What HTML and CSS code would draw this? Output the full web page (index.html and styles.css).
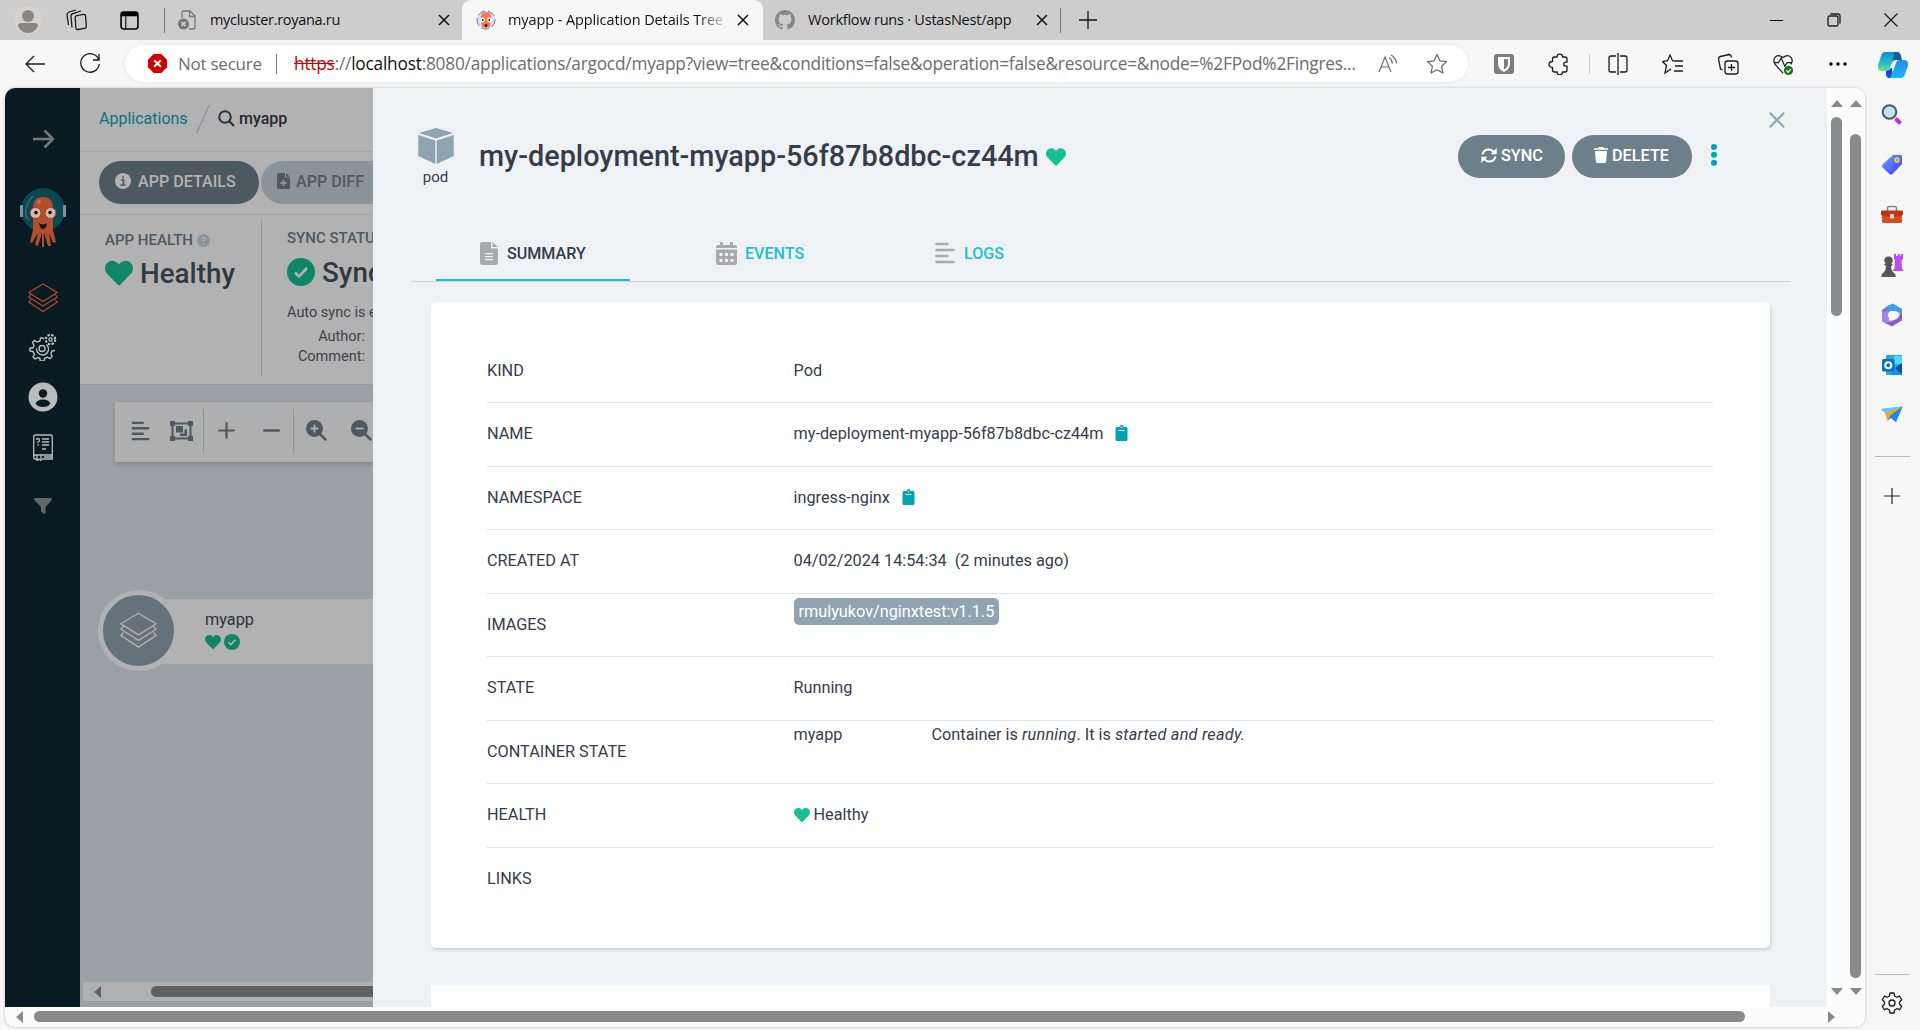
FILE: index.html
```html
<!DOCTYPE html>
<html lang="en">
<head>
<meta charset="utf-8">
<title>myapp - Application Details Tree</title>
<link rel="stylesheet" href="styles.css">
</head>
<body>
<svg class="defs" aria-hidden="true">
  <symbol id="heart" viewBox="0 0 512 512"><path d="M462 62c-55-47-136-38-186 14l-20 20-20-20C186 24 105 15 50 62c-63 54-66 150-10 208l193 199c13 13 33 13 46 0l193-199c56-58 53-154-10-208z"/></symbol>
  <symbol id="check" viewBox="0 0 28 28"><circle cx="14" cy="14" r="14"/><path d="M8 14.500l4 4 8-8.500" fill="none" stroke="#b2b2b2" stroke-width="2.600"/></symbol>
  <symbol id="layers" viewBox="0 0 30 30"><g fill="none" stroke="currentColor" stroke-width="1.100" stroke-linejoin="round"><path d="M15 1l14.300 8.500L15 18.500.7 9.500zM3 11.500L.7 14 15 23l14.300-9L27 11.500M3 16.500L.7 19 15 28.500 29.300 19 27 16.500"/></g></symbol>
  <symbol id="x" viewBox="0 0 12 12"><path d="M1 1l10 10M11 1L1 11" fill="none" stroke="currentColor" stroke-width="1.500"/></symbol>
  <symbol id="clip" viewBox="0 0 12 16"><path d="M1.500 2H4a2 2 0 0 1 4 0h2.500A1.500 1.500 0 0 1 12 3.500v11a1.500 1.500 0 0 1-1.500 1.500h-9A1.500 1.500 0 0 1 0 14.500v-11A1.500 1.500 0 0 1 1.500 2z"/><path d="M3 5.500h6" stroke="#fff" stroke-width="1"/><circle cx="6" cy="2.500" r=".8" fill="#fff"/></symbol>
  <symbol id="align" viewBox="0 0 20 22"><path d="M1.500 2h11M1.500 8h17M1.500 14h11M1.500 20h17" fill="none" stroke="currentColor" stroke-width="2.600" stroke-linecap="round"/></symbol>
</svg>

<header class="tabstrip">
  <svg class="avatar" viewBox="0 0 28 28"><circle cx="14" cy="14" r="14" fill="#d5d2ce"/><circle cx="14" cy="10" r="6" fill="#8a8582"/><path d="M4 20q0-3 3-3h14q3 0 3 3-3 7-10 7T4 20z" fill="#8a8582"/></svg>
  <svg class="workspaces line" viewBox="0 0 22 22"><rect x="9.500" y="6" width="10.500" height="14" rx="2" transform="rotate(-4 15 13) skewY(-6) translate(0 1.500)"/><path d="M6 18.500L5 7q0-2 2-2.500l8-2.500M2.500 16L1 6q0-2 2-3l7-2"/></svg>
  <svg class="tabmenu" viewBox="0 0 18 18"><rect x="1" y="1" width="16" height="16" rx="2.500" fill="none" stroke="#000" stroke-width="1.500"/><path d="M1 1h16v4H1z"/><path d="M5.500 5v12" stroke="#000"/></svg>
  <i class="vbar"></i>
  <div class="tab tab-first">
    <svg class="badpage" viewBox="0 0 18 20"><path d="M4 8V3q0-2 2-2h6l5 5v11q0 2-2 2h-4M11.500 1v5.500H17" fill="none" stroke="#767676" stroke-width="1.300"/><circle cx="5.500" cy="14" r="5.500" fill="#767676"/><path d="M3.500 12l4 4m0-4l-4 4" stroke="#ddd" stroke-width="1.300"/></svg>
    <span class="tab-title">mycluster.royana.ru</span>
    <svg class="tab-x"><use href="#x"/></svg>
  </div>
  <div class="tab tab-active">
    <svg class="favicon" viewBox="0 0 20 20"><circle cx="10" cy="10" r="9" fill="#dfe0ef" stroke="#7668b8" stroke-width="1" stroke-dasharray="8 3"/><path d="M4.500 9Q4.500 2 10 2t5.500 7l-2 9-2-1.500L10 19l-1.500-2.500-2 1.500z" fill="#ef7b4d"/><circle cx="6.500" cy="10" r="2.400" fill="#fff"/><circle cx="13.500" cy="10" r="2.400" fill="#fff"/><circle cx="6.700" cy="10" r=".9"/><circle cx="13.300" cy="10" r=".9"/><circle cx="10" cy="15.500" r="1.500" fill="#222"/></svg>
    <span class="tab-title">myapp - Application Details Tree</span>
    <svg class="tab-x"><use href="#x"/></svg>
  </div>
  <div class="tab tab-last">
    <svg class="github" viewBox="0 0 16 16"><path d="M8 0C3.580 0 0 3.580 0 8c0 3.540 2.290 6.530 5.470 7.590.4.070.55-.17.55-.38v-1.490c-2.010.37-2.530-.49-2.690-.94-.09-.23-.48-.94-.82-1.130-.28-.15-.68-.52-.01-.53.63-.01 1.080.58 1.230.82.72 1.210 1.870.87 2.330.66.07-.52.28-.87.51-1.070-1.780-.2-3.640-.89-3.640-3.950 0-.87.31-1.590.82-2.150-.08-.2-.36-1.020.08-2.120 0 0 .67-.21 2.200.82A7.600 7.600 0 0 1 8 3.860c.68 0 1.360.09 2 .27 1.530-1.040 2.200-.82 2.200-.82.44 1.100.16 1.920.08 2.120.51.56.82 1.270.82 2.150 0 3.070-1.870 3.750-3.650 3.950.29.25.54.73.54 1.480v2.200c0 .21.15.46.55.38A8 8 0 0 0 16 8c0-4.420-3.580-8-8-8z"/></svg>
    <span class="tab-title">Workflow runs · UstasNest/app</span>
    <svg class="tab-x"><use href="#x"/></svg>
  </div>
  <i class="vbar"></i>
  <svg class="newtab" viewBox="0 0 18 18"><path d="M9 0v18M0 9h18" stroke="#111" stroke-width="1.300"/></svg>
  <div class="winbtns">
    <svg viewBox="0 0 14 14"><path d="M0 7.500h13" stroke="#000"/></svg>
    <svg viewBox="0 0 14 14" class="line"><rect x="1" y="3" width="10" height="10" rx="1.500"/><path d="M3.500 1H11q2 0 2 2v7.500"/></svg>
    <svg viewBox="0 0 14 14" class="line"><path d="M.5.5l13 13m0-13l-13 13"/></svg>
  </div>
</header>

<div class="toolbar">
  <svg class="back line" viewBox="0 0 20 18"><path d="M20 9H1M9 1L1 9l8 8"/></svg>
  <svg class="reload line" viewBox="0 0 22 22"><path d="M19.500 6A9.300 9.300 0 1 0 20.300 11M20 1v6h-6"/></svg>
  <div class="urlbar">
    <svg class="unsafe" viewBox="0 0 20 20"><path d="M6 0h8l6 6v8l-6 6H6l-6-6V6z" fill="#d10000"/><path d="M6.500 6.500l7 7m0-7l-7 7" stroke="#fff" stroke-width="2.200"/></svg>
    <span class="notsecure">Not secure</span>
    <i class="urlsep"></i>
    <span class="url"><s>https</s>://<b>localhost</b>:8080/applications/argocd/myapp?view=tree&amp;conditions=false&amp;operation=false&amp;resource=&amp;node=%2FPod%2Fingres...</span>
    <svg class="read" viewBox="0 0 20 20"><path d="M1 18L7 3l6 15M3.200 13h7.600M11 3.500q3 2 3.500 6M13 1q5 3 5.500 8.500" fill="none" stroke="#6a6a6a" stroke-width="1.200"/></svg>
    <svg class="star" viewBox="0 0 22 22"><path d="M11 1.500l2.900 6.300 6.700.8-5 4.700 1.400 6.800-6-3.400-6 3.400 1.400-6.800-5-4.700 6.700-.8z" fill="none" stroke="#666" stroke-width="1.200" stroke-linejoin="round"/></svg>
  </div>
  <div class="tools">
    <svg viewBox="0 0 22 22"><rect x="1" y="1" width="20" height="20" rx="3" fill="#7d7d7d"/><path d="M5 4h12v7q0 5-6 8-6-3-6-8z" fill="#fff"/><path d="M11 6h4v5q0 3-4 5.500z" fill="#7d7d7d"/></svg>
    <svg viewBox="0 0 22 22" class="line"><path d="M6.500 4H9a2.800 2.800 0 0 1 5.600 0H17q2 0 2 2v3.200h-1.200a2 2 0 0 0 0 4H19V17q0 2-2 2h-2.400a2.800 2.800 0 0 1-5.600 0H6.500q-2 0-2-2v-2.500H4a3 3 0 0 1 0-6h.5V6q0-2 2-2z"/></svg>
    <i class="toolsep"></i>
    <svg viewBox="0 0 22 22" class="line"><path d="M9 3H4Q2 3 2 5v12q0 2 2 2h5M13 3h5q2 0 2 2v12q0 2-2 2h-5M11 0v22"/></svg>
    <svg viewBox="0 0 22 22" class="line"><path d="M13 8l-2.500-.3L8 2 5.500 7.700l-5 .8 4 4L3 20l6-4M13 8h8M13 13h8M12 18h9"/></svg>
    <svg viewBox="0 0 22 22" class="line"><rect x="8" y="8" width="13" height="13" rx="2.500"/><path d="M14.500 11v7M11 14.500h7M5.500 17L3.500 16 1.500 6q0-2 2-2.500L12 1.500q2 0 2.500 3"/></svg>
    <svg viewBox="0 0 22 24" class="line"><path d="M11 22L2.500 12.500Q-.5 8 2.500 4.500t8.500.5q5-4 8.500-.5 3 4 0 8M2 10.500h4l3-5 4 9 2.500-4H20"/><circle cx="17" cy="19" r="5" fill="#167c17" stroke="none"/><path d="M14.500 19l2 2 3-3.500" stroke="#fff"/></svg>
    <svg viewBox="0 0 22 22"><circle cx="4" cy="11" r="1.700"/><circle cx="11" cy="11" r="1.700"/><circle cx="18" cy="11" r="1.700"/></svg>
  </div>
  <svg class="copilot" viewBox="0 0 30 26"><defs><linearGradient id="ca" x2="0" y2="1"><stop stop-color="#0a8fd8"/><stop offset=".5" stop-color="#20b8c8"/><stop offset="1" stop-color="#72dc8c"/></linearGradient><linearGradient id="cb" x2="0" y2="1"><stop stop-color="#2c8bea"/><stop offset="1" stop-color="#19b8f5"/></linearGradient></defs><path d="M7 0h12q3 0 4 4l-6 3q-2 0-3 4l-2 5q-1 3-4 3H3q-4-1-3-6L3 4q1-4 4-4z" fill="url(#ca)"/><path d="M16 0h3q3 0 4 4l1 4h-6q-2 0-4 2 2-4 2-10z" fill="#155c9e"/><path d="M23 26H11q-3 0-3-4l4-2h1q2 0 3-4l2-5q1-3 3-3h6q4 1 3 6l-3 8q-1 4-4 4z" fill="url(#cb)"/><path d="M8 19q3 0 5-3l1 0v5q-1 5-3 5t-3-4z" fill="#1747d8"/></svg>
</div>

<div class="body">
  <div class="viewport">
    <div class="page">
      <nav class="nav">
        <svg class="n-arrow" viewBox="0 0 22 20"><path d="M1 10h20M12.500 1.500L21 10l-8.500 8.500" fill="none" stroke="#73787a" stroke-width="2.500"/></svg>
        <svg class="n-logo" viewBox="0 0 46 60"><circle cx="23" cy="22" r="21.500" fill="#0a4850" stroke="#17434e"/><rect y="17" width="3" height="12" rx="1" fill="#8092a0"/><rect x="43" y="17" width="3" height="12" rx="1" fill="#8092a0"/><path d="M13 8Q7 14 6 22t3 10" fill="none" stroke="#3a7075" stroke-width="1.300"/><path d="M13 20q0-11 10-11t10 11v22l3 12-3 1-4-10 2 13h-3l-4-13v14h-2V45l-4 13-3-1 3-12-6 10-2-1 3-12z" fill="#b24e2b"/><circle cx="15.500" cy="25" r="5.500" fill="#cbb9b1" stroke="#aa3928"/><circle cx="30.500" cy="25" r="5.500" fill="#cbb9b1" stroke="#aa3928"/><circle cx="16" cy="24.500" r="1.700"/><circle cx="30" cy="24.500" r="1.700"/><path d="M19 35q4 3 8 0-1 6-4 6t-4-6z" fill="#160e0e"/><circle cx="19" cy="14" r="2" fill="#c6724e"/></svg>
        <svg class="n-layers"><use href="#layers"/></svg>
        <svg class="n-gear" viewBox="0 0 28 28" fill="none" stroke="#b7bec0" stroke-width="1.400"><circle cx="13" cy="15.500" r="3"/><path d="M15 6l-1-1h-2.500L11 8 8 9 5.500 7.500 3.500 9.500 5 12.500 4 15H1v3l3 .5 1.500 3L4 24l2 2 3-1.500 2 1V28h4l.5-2.500 3-1.500 2.500 1.500 2-2-1-3 1-2.500 3-.5M7.500 15.500a6 6 0 1 0 10-4"/><circle cx="21.500" cy="6.500" r="1.600"/><circle cx="21.500" cy="6.500" r="4.700" stroke-width="2.200" stroke-dasharray="2.400 1.300"/></svg>
        <svg class="n-user" viewBox="0 0 30 30"><circle cx="15" cy="15" r="14.500" fill="#b7bbbc"/><circle cx="15" cy="11.500" r="4.200" fill="#0a1a22"/><path d="M7.500 21.500q2-4 7.500-4t7.500 4Q20 25 15 25t-7.500-3.500z" fill="#0a1a22"/></svg>
        <svg class="n-docs" viewBox="0 0 20 27" fill="none" stroke="#b7bec0" stroke-width="1.300"><path d="M4 25H2.500Q.7 25 .7 23V3Q.7 1 2.500 1h15q1.800 0 1.800 2v22H9M.7 23q0-2 2-2h16.500M4 21v5.500l2-1.500 2 1.500V21M11 23h8M9 5h7M9 8h7M9 11h7M9 15h4"/><path d="M3.500 6q0-1.500 1.500-1.500T6.500 6 5 8v1.200M5 10.500v1.500"/></svg>
        <svg class="n-filter" viewBox="0 0 18 16"><path d="M1 0h16q1.500.5.7 2L11.500 9v6.500q-1 1-2 0L7 13.500V9L.3 2Q-.5.500 1 0z" fill="#5f6769"/></svg>
      </nav>

      <main class="main">
        <div class="crumbs"><span class="crumb-link">Applications</span>
          <svg class="slash" viewBox="0 0 14 28"><path d="M.7 28L13.300 0" stroke="#8b9399" stroke-width="1.200"/></svg>
          <svg class="crumb-search" viewBox="0 0 17 17"><circle cx="7" cy="7" r="5.800" fill="none" stroke="#2c323a" stroke-width="2"/><path d="M11 11l5 5" stroke="#2c323a" stroke-width="2.300"/></svg>
          <span class="crumb-name">myapp</span></div>
        <div class="actions">
          <div class="pill pill-dark"><svg viewBox="0 0 16 16"><circle cx="8" cy="8" r="8" fill="#b2b2b2"/><path d="M6 7h2.500v5M5.500 12h5M8 3.300v2" fill="none" stroke="#4c5961" stroke-width="1.700"/></svg><span>APP DETAILS</span></div>
          <div class="pill pill-pale"><svg class="filei" viewBox="0 0 13 16"><path d="M1.500 0H8v4.500h5v10q0 1.500-1.500 1.500h-10Q0 16 0 14.500v-13Q0 0 1.500 0zM9 0l4 3.700H9z" fill="#4c5961"/><path d="M6.500 7v6M3.500 10h6" stroke="#9aa1a6" stroke-width="1.500"/></svg><span>APP DIFF</span></div>
        </div>
        <section class="status">
          <div class="st-health">
            <div class="st-label">APP HEALTH<svg viewBox="0 0 14 14"><circle cx="7" cy="7" r="7" fill="#8c949b"/><path d="M5 5.500q.3-2 2-2t2 1.500Q9 6.200 7 7.300v.9M7 9.500V11" fill="none" stroke="#b2b2b2" stroke-width="1.300"/></svg></div>
            <div class="st-value"><svg class="green"><use href="#heart"/></svg><span>Healthy</span></div>
          </div>
          <div class="st-sync">
            <div class="st-label">SYNC STATUS</div>
            <div class="st-value"><svg class="green"><use href="#check"/></svg><span>Synced</span></div>
            <div class="st-auto">Auto sync is enabled.</div>
            <div class="st-meta">Author:</div>
            <div class="st-meta">Comment:</div>
          </div>
        </section>
        <section class="canvas">
          <div class="zoombar">
            <svg class="z-align"><use href="#align"/></svg>
            <svg class="z-group" viewBox="0 0 23 20"><g fill="none" stroke="currentColor" stroke-width="2"><path d="M2.500 2.500h18v15h-18z"/></g><path d="M0 0h5v5H0zM18 0h5v5h-5zM0 15h5v5H0zM18 15h5v5h-5zM6 5h7v6.500H6zM14.500 8.500H17V15h-7v-2.500h4.500z" fill="currentColor"/></svg>
            <i></i>
            <svg class="z-plus" viewBox="0 0 17 17"><path d="M8.500 1.200v14.600M1.200 8.500h14.600" stroke="currentColor" stroke-width="2.200" stroke-linecap="round"/></svg>
            <svg class="z-minus" viewBox="0 0 17 17"><path d="M1.200 8.500h14.600" stroke="currentColor" stroke-width="2.400" stroke-linecap="round"/></svg>
            <i></i>
            <svg class="z-in" viewBox="0 0 21 21"><circle cx="8.500" cy="8.500" r="8.500" fill="currentColor"/><path d="M14 14l5.500 5.500" stroke="currentColor" stroke-width="2.500" stroke-linecap="round"/><path d="M8.500 4.500v8M4.500 8.500h8" stroke="#aeafae" stroke-width="1.800"/></svg>
            <svg class="z-out" viewBox="0 0 21 21"><circle cx="8.500" cy="8.500" r="8.500" fill="currentColor"/><path d="M14 14l5.500 5.500" stroke="currentColor" stroke-width="2.500" stroke-linecap="round"/><path d="M4.500 8.500h8" stroke="#aeafae" stroke-width="1.800"/></svg>
          </div>
          <div class="node">
            <div class="node-icon"><svg><use href="#layers"/></svg></div>
            <div class="node-text"><span>myapp</span><div class="node-marks"><svg class="green"><use href="#heart"/></svg><svg class="green" viewBox="0 0 28 28"><use href="#check"/></svg></div></div>
          </div>
          <div class="canvas-scroll"><i class="tri left"></i><i class="thumb"></i></div>
        </section>
      </main>

      <section class="panel">
        <div class="panel-close"><svg viewBox="0 0 16 16"><path d="M.8.8l14.400 14.400m0-14.400L.8 15.200" stroke="#8fa4b1" stroke-width="2"/></svg></div>
        <div class="panel-head">
          <div class="kind"><svg viewBox="0 0 36 36"><path d="M18 0l17 5-17 5.500L1 5zM.3 7L17.300 12.500V36L.3 28zM35.700 7L18.700 12.500V36l17-8z" fill="#8fa4b1"/></svg><span>pod</span></div>
          <h1>my-deployment-myapp-56f87b8dbc-cz44m</h1>
          <svg class="head-heart"><use href="#heart"/></svg>
          <div class="btn btn-sync"><svg viewBox="0 0 16 15"><path d="M1.500 6.500Q2.500 1.500 8 1.500q3 0 5.500 3.500M14.500 8.500q-1 5-6.500 5-3 0-5.500-3.500" fill="none" stroke="#fff" stroke-width="2"/><path d="M15.700 0v6.200H9.500zM.3 15V8.800h6.200z" fill="#fff"/></svg><span>SYNC</span></div>
          <div class="btn btn-del"><svg viewBox="0 0 14 16"><path d="M0 1.200h4L5 0h4l1 1.200h4v1.600H0zM1 4h12l-.8 10.600Q12 16 10.800 16H3.200Q2 16 1.800 14.600z" fill="#fff"/></svg><span>DELETE</span></div>
          <svg class="dots" viewBox="0 0 6 22"><circle cx="3" cy="3" r="3"/><circle cx="3" cy="10.800" r="3"/><circle cx="3" cy="18.700" r="3"/></svg>
        </div>
        <div class="ptabs">
          <div class="ptab on"><svg class="i-doc" viewBox="0 0 18 23"><path d="M2.500 0H11v6.500h7v14q0 2.500-2.500 2.500h-13Q0 23 0 20.500v-18Q0 0 2.500 0zM12.500 0L18 5h-5.500z" fill="#aaa"/><path d="M5 11.700h8M5 14.700h8M5 17.700h8" stroke="#eef2f5" stroke-width="1.200"/></svg><span>SUMMARY</span></div>
          <div class="ptab"><svg class="i-cal" viewBox="0 0 21 23"><path d="M4 0h3v3h7V0h3v3h2q2 0 2 3H0q0-3 2-3h2zM0 7.500h21v13q0 2.500-2.500 2.500h-16Q0 23 0 20.500z" fill="#aaa"/><path d="M3.500 11h3v3h-3zM9 11h3v3H9zM14.500 11h3v3h-3zM3.500 17h3v3h-3zM9 17h3v3H9zM14.500 17h3v3h-3z" fill="#eef2f5"/></svg><span>EVENTS</span></div>
          <div class="ptab"><svg class="i-logs"><use href="#align"/></svg><span>LOGS</span></div>
        </div>
        <div class="card">
          <div class="row"><label>KIND</label><div>Pod</div></div>
          <div class="row"><label>NAME</label><div>my-deployment-myapp-56f87b8dbc-cz44m<svg class="clip"><use href="#clip"/></svg></div></div>
          <div class="row"><label>NAMESPACE</label><div>ingress-nginx<svg class="clip"><use href="#clip"/></svg></div></div>
          <div class="row"><label>CREATED AT</label><div>04/02/2024 14:54:34&nbsp; (2 minutes ago)</div></div>
          <div class="row"><label>IMAGES</label><div class="top"><span class="image">rmulyukov/nginxtest:v1.1.5</span></div></div>
          <div class="row"><label>STATE</label><div>Running</div></div>
          <div class="row"><label>CONTAINER STATE</label><div class="top containers"><span>myapp</span><span>Container is <em>running</em>. It is <em>started and ready.</em></span></div></div>
          <div class="row"><label>HEALTH</label><div><svg class="row-heart"><use href="#heart"/></svg>Healthy</div></div>
          <div class="row"><label>LINKS</label><div></div></div>
        </div>
        <div class="card next"></div>
      </section>

      <div class="vscroll inner"><i class="tri up"></i><i class="thumb"></i><i class="tri down"></i></div>
      <div class="vscroll outer"><i class="tri up"></i><i class="thumb"></i><i class="tri down"></i></div>
    </div>
    <div class="hscroll"><i class="tri left"></i><i class="thumb"></i><i class="tri right"></i></div>
  </div>

  <aside class="side">
    <svg viewBox="0 0 24 24"><path d="M15.500 15.500l5 5" stroke="#b730f4" stroke-width="4"/><circle cx="9.500" cy="9" r="6.800" fill="#bce3f7" stroke="#555" stroke-width="2"/></svg>
    <svg viewBox="0 0 24 24"><defs><linearGradient id="tg" x2="1" y2="1"><stop stop-color="#67adff"/><stop offset="1" stop-color="#3a35f5"/></linearGradient></defs><path d="M13 2h8q1 0 1 1v8L12.500 21q-1.500 1.500-3 0l-7-6.500q-1.500-1.500 0-3z" fill="url(#tg)"/><circle cx="17" cy="7" r="2" fill="#7ba3d8" stroke="#ffd02c" stroke-width="1.500"/></svg>
    <svg viewBox="0 0 24 24"><path d="M7.500 8V5q0-1.500 1.500-1.500h6q1.500 0 1.500 1.500v3" fill="none" stroke="#888" stroke-width="1.600"/><path d="M2 10h20v8.500q0 1.500-1.500 1.500h-17Q2 20 2 18.500z" fill="#d94b1c"/><path d="M2 7.500h20q1 0 1 2V12q-3 1.500-11 1.500T1 12V9.500q0-2 1-2z" fill="#bd3510"/><rect x="10" y="11" width="4" height="4.500" rx="1" fill="#d0d4d8"/></svg>
    <svg viewBox="0 0 24 24"><path d="M14 1h2v2h2V1h2v2h1V1h2v5l-1.500 1.500.5 8 1.500 1.500v1H13v-1l1.500-1.500.5-8L14 6z" fill="#c04af5"/><path d="M8.500 3.500a4 4 0 0 1 3 7L13 12l-2 1q0 4 2 6l2.500 2.500V24h-14v-2.500L4 19q2-2 2-6l-2-1 1.500-1.500a4 4 0 0 1 3-7z" fill="#555"/></svg>
    <svg viewBox="0 0 24 24"><path d="M2 7l7-5v14l-4 4-3-2z" fill="#6f7bd6"/><path d="M9 2l4-1.500L22 6v6l-6-4-8 1q-1-4 1-7z" fill="#3fa0ea"/><path d="M22 11v6.500L12 23.500 5 20l9-3q5-1 6-7z" fill="#8a5fc0"/><path d="M2 18V9l6-1v9l4 1-7 2.500z" fill="#a487dc"/><circle cx="12" cy="12.300" r="4.200" fill="#f7f7f7"/></svg>
    <svg viewBox="0 0 24 24"><rect x="6" y="2" width="16" height="20" rx="1" fill="#28a8ea"/><path d="M14 3h8v8h-8z" fill="#50d9ff"/><path d="M22 11v11H9l5-4z" fill="#1490df"/><path d="M15 15l7-5v11z" fill="#0a4f9a"/><rect x="2" y="6" width="12.500" height="12.500" rx="1.500" fill="#0870cc"/><circle cx="8.300" cy="12.200" r="3" fill="none" stroke="#fff" stroke-width="2"/></svg>
    <svg viewBox="0 0 24 24"><path d="M1 6l21.500-2.500L16 19l-6-5z" fill="#2fa9f2"/><path d="M22.500 3.500L7 12 1 6z" fill="#58cdf8"/><path d="M22.500 3.500L10 12.500 7.500 18 5 10z" fill="#f3a712"/><path d="M22.500 3.500L10 13l-2.500 5 3.500-3 5 4z" fill="#2684ec"/></svg>
    <hr>
    <svg class="s-plus" viewBox="0 0 16 16"><path d="M8 0v16M0 8h16" stroke="#222" stroke-width="1.200"/></svg>
    <hr class="last">
    <svg class="s-gear line" viewBox="0 0 24 24"><circle cx="12" cy="12" r="3"/><path d="M10 2h4l.6 3 2.200 1.200 2.900-1 2 3.500L19.500 11v2l2.200 2.200-2 3.500-2.900-1-2.200 1.300-.6 3h-4l-.6-3-2.200-1.300-2.900 1-2-3.500L4.500 13v-2L2.300 8.700l2-3.500 2.900 1L9.400 5z" stroke-linejoin="round"/></svg>
  </aside>
</div>
</body>
</html>
```
FILE: styles.css
```css
* { box-sizing: border-box; }
body {
  margin: 0;
  width: 1920px;
  height: 1030px;
  overflow: hidden;
  display: flex;
  flex-direction: column;
  background: #f7f7f7;
  font-family: Roboto, "Liberation Sans", sans-serif;
  font-size: 16.250px;
  color: #363c4a;
}
svg { display: block; flex: none; }
i { display: block; flex: none; }
.defs { position: absolute; width: 0; height: 0; }
.line { fill: none; stroke: #1a1a1a; stroke-width: 1.300; }

/* Browser tab strip */
.tabstrip {
  height: 40px;
  flex: none;
  display: flex;
  align-items: center;
  background: #cdcdcd;
  font-family: "Open Sans", "Noto Sans", sans-serif;
  font-size: 14.500px;
  color: #111;
}
.avatar { width: 28px; height: 28px; margin-left: 14px; }
.workspaces { width: 22px; height: 22px; margin-left: 24px; }
.tabmenu { width: 19px; height: 19px; margin-left: 32px; }
.vbar { width: 1px; height: 25px; background: #777; }
.tabmenu + .vbar { margin-left: 25px; }
.tab { display: flex; align-items: center; height: 40px; white-space: nowrap; }
.tab-x { width: 12px; height: 12px; color: #111; }
.tab-title { overflow: hidden; line-height: 24px; margin-top: -1px; }
.tab-first { width: 297px; padding-left: 13px; }
.badpage { width: 18px; height: 20px; }
.tab-first .tab-title { width: 212px; margin-left: 14px; letter-spacing: -.3px; }
.tab-first .tab-x { margin-left: 16px; }
.tab-active { width: 301px; padding-left: 14px; background: #f7f7f7; border-radius: 9px 9px 0 0; }
.favicon { width: 20px; height: 20px; }
.tab-active .tab-title { width: 216px; margin-left: 12px; letter-spacing: -.1px; mask-image: linear-gradient(90deg, #000 190px, transparent 222px); }
.tab-active .tab-x { margin-left: 13px; }
.tab-last { width: 297px; padding-left: 12px; }
.github { width: 20px; height: 20px; fill: #888; }
.tab-last .tab-title { width: 214px; margin-left: 13px; letter-spacing: -.22px; }
.tab-last .tab-x { margin-left: 14px; }
.newtab { width: 18px; height: 18px; margin-left: 18px; }
.winbtns { display: flex; gap: 43px; margin-left: auto; margin-right: 22px; }
.winbtns svg { width: 14px; height: 14px; }

/* Address bar */
.toolbar { height: 47px; flex: none; display: flex; align-items: center; }
.back { width: 20px; height: 18px; margin-left: 25px; }
.reload { width: 22px; height: 22px; margin-left: 34px; }
.urlbar {
  width: 1343px;
  height: 37px;
  margin-left: 24px;
  display: flex;
  align-items: center;
  background: #fff;
  border-radius: 19px;
  box-shadow: 0 0 4px #e4e4e4;
  font-family: "Open Sans", "Noto Sans", sans-serif;
  font-size: 17px;
  color: #6d6d6d;
  white-space: nowrap;
}
.unsafe { width: 19px; height: 19px; margin-left: 23px; }
.notsecure { width: 98px; margin-left: 11px; letter-spacing: -.25px; }
.urlsep { width: 1px; height: 20px; background: #777; }
.url { width: 1068px; margin-left: 17px; font-size: 17.300px; letter-spacing: -.22px; }
.url s { color: #c00; }
.url b { font-weight: 400; color: #111; }
.read { width: 20px; height: 20px; margin-left: 16px; }
.star { width: 22px; height: 22px; margin-left: 28px; }
.tools { width: 367px; margin-left: 25px; display: flex; align-items: center; }
.tools svg { width: 22px; height: 22px; margin-right: 33px; }
.tools svg:nth-child(2) { margin-right: 19px; }
.toolsep { width: 1px; height: 20px; margin-right: 17px; background: #ccc; }
.copilot { width: 30px; height: 26px; margin-left: 18px; margin-top: 2px; }

/* Framed web page and browser side bar */
.body { flex: 1; display: flex; min-height: 0; padding: 1px 0 3px 5px; }
.viewport {
  width: 1860px;
  display: flex;
  flex-direction: column;
  overflow: hidden;
  border-radius: 10px;
  background: #fcfcfc;
  box-shadow: 0 0 3px #bbb;
}
.page { height: 919px; display: flex; flex: none; }
.tri { width: 0; height: 0; border: 6.500px solid transparent; }
.tri.up { border-top: 0; border-bottom: 7px solid #8a8a8a; }
.tri.down { border-bottom: 0; border-top: 7px solid #8a8a8a; }
.tri.left { border-left: 0; border-right: 7px solid #8a8a8a; }
.tri.right { border-right: 0; border-left: 7px solid #8a8a8a; }
.thumb { background: #8a8a8a; border-radius: 6px; }
.vscroll { width: 19px; display: flex; flex-direction: column; align-items: center; padding: 12px 0; background: #fcfcfc; }
.vscroll .thumb { width: 11px; }
.inner .thumb { height: 199px; margin-top: 10px; }
.outer .thumb { height: 844px; margin-top: 27px; }
.vscroll .down { margin-top: auto; }
.hscroll { height: 19px; display: flex; align-items: center; padding-left: 11px; }
.hscroll .thumb { width: 1711px; height: 11px; margin-left: 11px; }
.hscroll .right { margin-left: 83px; }

/* Navigation */
.nav { width: 75px; display: flex; flex-direction: column; align-items: center; padding: 41px 0 0; background: #0a1a22; }
.n-arrow { width: 22px; height: 20px; }
.n-logo { width: 46px; height: 60px; margin-top: 39px; }
.n-layers { width: 30px; height: 30px; margin-top: 35px; color: #b24f2f; }
.n-gear { width: 28px; height: 28px; margin-top: 20px; }
.n-user { width: 30px; height: 30px; margin-top: 21px; }
.n-docs { width: 20px; height: 27px; margin-top: 22px; }
.n-filter { width: 18px; height: 16px; margin-top: 37px; }

/* Dimmed application page */
.main { width: 293px; overflow: hidden; display: flex; flex-direction: column; background: #b2b2b2; color: #3a4248; }
.crumbs { height: 64px; flex: none; display: flex; align-items: center; padding: 0 0 2px 19px; border-bottom: 1px solid #a3a5a7; font-size: 16px; }
.crumb-link { width: 89px; color: #0b717d; }
.slash { width: 14px; height: 28px; margin-left: 8px; }
.crumb-search { width: 17px; height: 17px; margin-left: 8px; }
.crumb-name { margin-left: 4px; font-weight: 500; color: #262a33; }
.actions { height: 63px; flex: none; display: flex; gap: 2px; padding: 9px 0 0 19px; border-bottom: 1px solid #a3a5a7; }
.pill { height: 43px; flex: none; display: flex; align-items: center; padding: 0 0 3px 16px; border-radius: 22px; font-size: 16.100px; font-weight: 500; white-space: nowrap; }
.pill-dark { width: 160px; background: #4c5961; color: #b2b2b2; }
.pill-pale { width: 150px; background: #8c949b; color: #4c5961; }
.pill svg { width: 16px; height: 16px; margin-right: 7px; }
.pill svg.filei { width: 13px; margin-right: 6px; }
.status { height: 170px; flex: none; display: flex; border-bottom: 1px solid #93979a; }
.st-health { width: 182px; height: 157px; flex: none; margin-top: 4px; padding: 12px 0 0 25px; border-right: 1px solid #93979a; }
.st-label { display: flex; align-items: center; gap: 4px; font-size: 15px; line-height: 18px; font-weight: 500; color: #4c5961; white-space: nowrap; }
.st-label svg { width: 13px; height: 13px; }
.st-value { display: flex; align-items: center; gap: 7px; height: 34px; margin-top: 7px; font-size: 27.800px; font-weight: 500; color: #323a41; }
.st-value svg { width: 28px; height: 28px; }
.green { fill: #118567; }
.st-sync { flex: none; padding: 14px 0 0 25px; font-size: 15px; white-space: nowrap; }
.st-sync .st-value { margin-top: 8px; }
.st-auto { line-height: 20px; margin-top: 14px; font-size: 14.500px; }
.st-meta { width: 78px; line-height: 20px; text-align: right; font-size: 14.500px; }
.st-auto + .st-meta { margin-top: 4px; }
.canvas { flex: 1; display: flex; flex-direction: column; background: #9ba0a4; }
.zoombar { height: 60px; flex: none; margin: 17px 0 0 35px; padding: 0 0 3px 16px; display: flex; align-items: center; background: #aeafae; box-shadow: 0 2px 4px #7d868d; color: #4c5961; }
.zoombar i { width: 1px; height: 44px; background: #8a9298; }
.z-align { width: 19px; height: 20px; }
.z-group { width: 23px; height: 20px; margin: 0 10px 0 20px; }
.z-plus { width: 17px; height: 17px; margin-left: 14px; }
.z-minus { width: 17px; height: 17px; margin: 0 13px 0 28px; }
.z-in { width: 21px; height: 21px; margin-left: 12px; }
.z-out { width: 21px; height: 21px; margin-left: 24px; }
.node { display: flex; align-items: center; margin: 128px 0 0 18px; height: 81px; background: linear-gradient(#b2b2b2, #b2b2b2) 40px 9px / 300px 65px no-repeat; }
.node-icon { width: 81px; height: 81px; display: grid; place-items: center; border: 5px solid #b2b2b2; border-radius: 50%; background: #64727b; color: #b2b2b2; }
.node-icon svg { width: 37px; height: 37px; }
.node-text { margin: -2px 0 0 26px; line-height: 20px; color: #2c323c; }
.node-marks { display: flex; gap: 3px; margin-top: 4px; }
.node-marks svg { width: 16px; height: 16px; }
.canvas-scroll { height: 19px; display: flex; align-items: center; margin: auto 0 6px 3px; padding-left: 11px; background: #b0b0b0; }
.canvas-scroll .tri { border-right-color: #606060; }
.canvas-scroll .thumb { width: 240px; height: 11px; margin-left: 50px; background: #606060; }

/* Resource panel */
.panel { width: 1454px; overflow: hidden; display: flex; flex-direction: column; background: #eef2f5; }
.panel-close { height: 40px; flex: none; display: flex; justify-content: flex-end; align-items: flex-end; padding-right: 42px; }
.panel-close svg { width: 16px; height: 16px; }
.panel-head { height: 60px; flex: none; display: flex; padding-left: 45px; }
.kind { width: 35px; display: flex; flex-direction: column; align-items: center; font-size: 15px; }
.kind svg { width: 36px; height: 36px; }
.kind span { line-height: 20px; margin-top: 3px; }
h1 { width: 559px; margin: 8px 0 0 26px; font-size: 28.800px; line-height: 40px; font-weight: 500; white-space: nowrap; }
.head-heart { width: 20px; height: 20px; margin: 19px 0 0 8px; fill: #18be94; }
.btn { height: 43px; display: flex; align-items: center; margin-top: 7px; padding-bottom: 3px; border-radius: 22px; background: #6d7f8b; color: #fff; font-weight: 500; }
.btn-sync { width: 107px; margin-left: 392px; padding-left: 23px; gap: 4px; }
.btn-sync svg { width: 16px; height: 15px; }
.btn-del { width: 120px; margin-left: 7px; padding-left: 22px; gap: 4px; }
.btn-del svg { width: 14px; height: 16px; }
.dots { width: 6px; height: 22px; margin: 16px 0 0 19px; fill: #00a2b3; }
.ptabs { height: 94px; flex: none; display: flex; gap: 42px; margin: 0 37px 0 38px; padding-left: 25px; border-bottom: 1px solid #ccd6dd; }
.ptab { height: 93px; display: flex; align-items: center; padding: 39px 44px 0; font-size: 16.100px; font-weight: 500; color: #1fbfcf; border-bottom: 2px solid transparent; }
.ptab.on { width: 194px; color: #363c4a; border-color: #1fbfcf; }
.ptab:nth-child(2) { width: 177px; }
.i-doc { width: 18px; height: 23px; margin-right: 9px; }
.i-cal { width: 21px; height: 23px; margin-right: 8px; }
.i-logs { width: 20px; height: 22px; margin-right: 9px; color: #aaa; }
.card { width: 1339px; height: 646px; flex: none; margin: 20px 0 0 58px; padding: 37.500px 57px 0 56px; background: #fff; border-radius: 5px; box-shadow: 1px 2px 3px rgba(40, 60, 80, .18); }
.card.next { height: 60px; margin-top: 37px; border-radius: 0; box-shadow: none; }
.row { height: 63.500px; display: flex; border-bottom: 1px solid #dee5ea; line-height: 62.500px; }
.row:last-child { border: 0; }
.row label { width: 306.500px; }
.row > div { display: flex; align-items: center; white-space: nowrap; }
.row > .top { align-items: flex-start; }
.clip { width: 13px; height: 16px; margin: -2px 0 0 12px; fill: #00a2b3; }
.image { margin-top: 4px; padding: 0 5px; border-radius: 5px; line-height: 27px; background: #8fa4b1; color: #fff; }
.containers { line-height: 28px; }
.containers span:first-child { width: 138px; }
.containers em { letter-spacing: .24px; }
.row-heart { width: 16px; height: 16px; margin-right: 4px; fill: #18be94; }

/* Browser side bar */
.side { width: 55px; display: flex; flex-direction: column; align-items: center; padding: 15px 1px 0 0; }
.side svg { width: 24px; height: 24px; margin-bottom: 26px; }
.side hr { width: 35px; height: 1px; margin: 3px 0 31px; border: 0; background: #bbb; }
.side .s-plus { width: 16px; height: 16px; margin: 0; }
.side .last { margin: auto 0 16px; }
.side .s-gear { margin-bottom: 12px; }
```
